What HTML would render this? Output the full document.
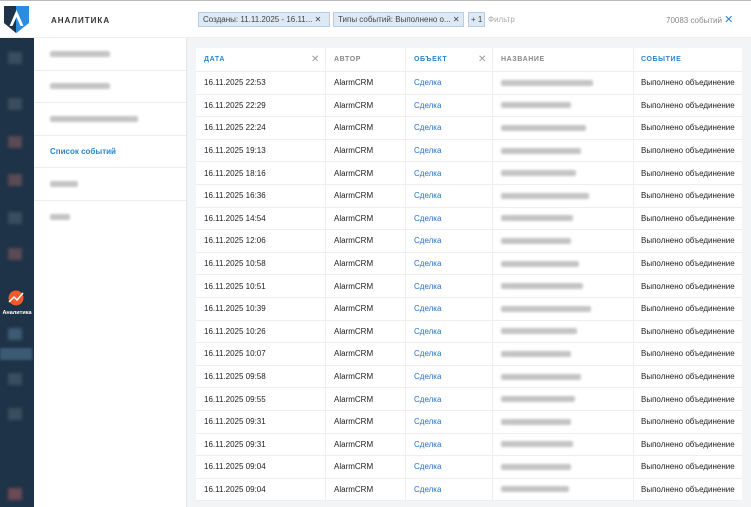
<!DOCTYPE html><html><head><meta charset="utf-8"><style>
*{box-sizing:border-box;margin:0;padding:0}
body{width:751px;height:507px;overflow:hidden;background:#f3f4f5;font-family:"Liberation Sans","DejaVu Sans",sans-serif;font-size:8px;color:#222;position:relative}
.top{position:absolute;left:0;top:0;width:751px;height:38px;background:#fff;border-top:1px solid #bbb;border-bottom:1px solid #eee}
.side{position:absolute;left:0;top:38px;width:34px;height:469px;background:#1e3347}
.logo{position:absolute;left:2px;top:4px;width:29px;height:30px}
.panel{position:absolute;left:34px;top:38px;width:153px;height:469px;background:#fff;border-right:1px solid #e6e6e6}
.pi{height:32.5px;border-bottom:1px solid #eee;display:flex;align-items:center;padding-left:16px}
.bl{background:#c4c4c4;filter:blur(1.3px);height:6px;border-radius:2px}
.title{position:absolute;left:51px;top:16px;font-size:8px;font-weight:bold;letter-spacing:1px;color:#333}
.chip{position:absolute;top:12px;height:15px;background:#dde9f5;border:1px solid #b5cde6;font-size:8px;color:#444;line-height:13px;padding-left:4px}
.tbl{position:absolute;left:196px;top:48px;width:546px;background:#fff}
.row{display:flex;height:22.6px;border-bottom:1px solid #eceef0;align-items:center}
.row>div{height:100%;display:flex;align-items:center;padding-left:8px;border-right:1px solid #eceef0;white-space:nowrap;overflow:hidden}
.c1{width:130px}.c2{width:80px}.c3{width:87px}.c4{width:141px}.c5{flex:1;border-right:none!important;padding-left:7px!important}
.h>div{font-size:7px;font-weight:bold;letter-spacing:.6px;color:#888;position:relative}
.h .b{color:#2a86d1}
.x{position:absolute;right:5px;color:#999;font-weight:normal;font-size:10px}
.lnk{color:#2a73c0}
.sq{position:absolute;left:8px;width:14px;height:12px;background:#3a4e60;filter:blur(1.5px)}
</style></head><body>
<div class="top"></div>
<svg class="logo" viewBox="0 0 29 30"><path d="M2 2h25v17l-12.5 10L2 19z" fill="#2a8de0"/><path d="M2 2h12v27L2 19z" fill="#1e3347"/><path d="M14.5 6l-7 16h3l4-9 4 9h3z" fill="#fff"/></svg>
<div class="title">АНАЛИТИКА</div>
<div class="side">
<div class="sq" style="top:14px"></div><div class="sq" style="top:60px"></div>
<div class="sq" style="top:98px;background:#5a4a55"></div><div class="sq" style="top:136px;background:#5a4a55"></div>
<div class="sq" style="top:174px"></div><div class="sq" style="top:210px;background:#5a4a55"></div>
<svg style="position:absolute;left:6px;top:251px" width="20" height="18" viewBox="0 0 20 18"><circle cx="10" cy="9" r="7.5" fill="#f05a28"/><path d="M3 13l5-5 3 3 6-7" stroke="#fff" stroke-width="1.5" fill="none"/></svg>
<div style="position:absolute;left:0;top:272px;width:34px;text-align:center;color:#fff;font-size:5.5px;font-weight:bold">Аналитика</div>
<div style="position:absolute;left:0;top:310px;width:32px;height:12px;background:#3c5a74;filter:blur(1px)"></div>
<div class="sq" style="top:290px;background:#3e5a72"></div><div class="sq" style="top:335px"></div><div class="sq" style="top:370px"></div>
<div class="sq" style="top:450px;background:#6a4a55"></div>
</div>
<div class="panel">
<div class="pi"><div class="bl" style="width:60px"></div></div>
<div class="pi"><div class="bl" style="width:60px"></div></div>
<div class="pi"><div class="bl" style="width:88px"></div></div>
<div class="pi" style="color:#2a86d1;font-weight:bold;font-size:8px">Список событий</div>
<div class="pi"><div class="bl" style="width:28px"></div></div>
<div class="pi" style="border:none"><div class="bl" style="width:20px"></div></div>
</div>
<div class="chip" style="left:198px;width:132px">Созданы: 11.11.2025 - 16.11... ✕</div>
<div class="chip" style="left:333px;width:131px">Типы событий: Выполнено о... ✕</div>
<div class="chip" style="left:468px;width:17px;padding-left:2px">+ 1</div>
<div style="position:absolute;left:488px;top:15px;color:#aaa;font-size:8px">Фильтр</div>
<div style="position:absolute;left:666px;top:13px;color:#888;font-size:8px">70083 событий <span style="color:#2a86d1;font-size:11px;font-weight:bold">✕</span></div>
<div class="tbl">
<div class="row h" style="height:24px"><div class="c1 b">ДАТА<span class="x">✕</span></div><div class="c2">АВТОР</div><div class="c3 b">ОБЪЕКТ<span class="x">✕</span></div><div class="c4">НАЗВАНИЕ</div><div class="c5 b">СОБЫТИЕ</div></div>
<div id="rows"></div>
</div>
<script>
var t=["22:53","22:29","22:24","19:13","18:16","16:36","14:54","12:06","10:58","10:51","10:39","10:26","10:07","09:58","09:55","09:31","09:31","09:04","09:04"];
var w=[92,70,85,80,75,88,72,70,78,82,90,76,70,80,74,70,72,70,68];
var h="";t.forEach(function(x,i){h+='<div class="row"><div class="c1">16.11.2025 '+x+'</div><div class="c2">AlarmCRM</div><div class="c3 lnk">Сделка</div><div class="c4"><div class="bl" style="width:'+w[i]+'px"></div></div><div class="c5">Выполнено объединение</div></div>'});
document.getElementById("rows").innerHTML=h;
</script>
</body></html>
